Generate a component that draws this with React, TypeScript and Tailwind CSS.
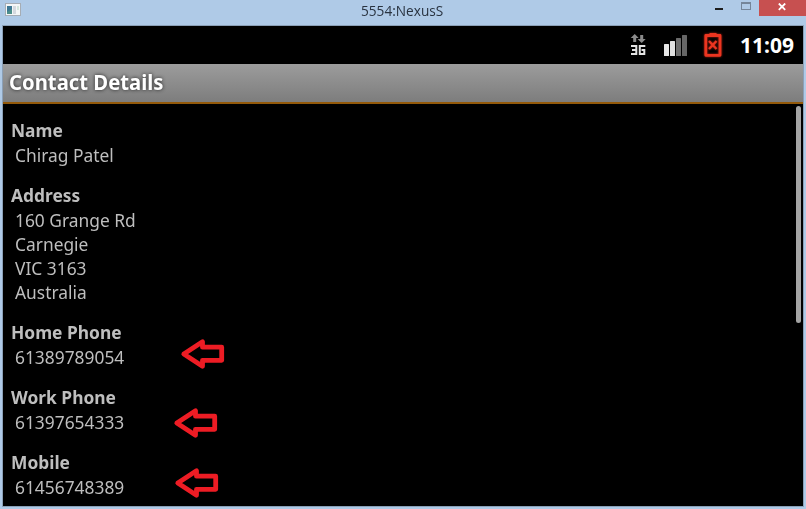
import React from "react";

const sections = [
  { title: "Name", lines: ["Chirag Patel"] },
  { title: "Address", lines: ["160 Grange Rd", "Carnegie", "VIC 3163", "Australia"] },
  { title: "Home Phone", lines: ["61389789054"], arrow: "left-[169px] top-[18px]" },
  { title: "Work Phone", lines: ["61397654333"], arrow: "left-[162px] top-[22px]" },
  { title: "Mobile", lines: ["61456748389"], arrow: "left-[163px] top-[17px]" },
];

function Arrow({ className }: { className: string }) {
  return (
    <svg className={`absolute ${className}`} width="46" height="34" viewBox="0 0 46 34" fill="none">
      <path
        d="M3.8 16 22.5 3.7V9.2H41.7V22.3H22.5V28.3L3.8 16Z"
        stroke="#ed1c24"
        strokeWidth="4.8"
        strokeLinejoin="round"
      />
    </svg>
  );
}

function TitleBar() {
  return (
    <header className="relative flex h-[25px] items-start justify-between">
      <svg className="ml-[5px] mt-[3px]" width="16" height="14">
        <rect x="0.5" y="0.5" width="15" height="12" fill="#f4f6f7" stroke="#a6adb5" />
        <rect x="2" y="3" width="5" height="8" fill="#4d8f8b" />
        <path d="M2 3h5v3L2 9z" fill="#3d7895" />
        <rect x="8" y="3" width="3" height="8" fill="#d5d9df" />
        <rect x="12" y="3" width="2" height="4" fill="#d3e6dd" />
      </svg>
      <h1 className="absolute left-[361px] top-0 origin-left scale-x-[0.91] font-['Open_Sans',sans-serif] text-[15px] leading-[21px] text-[#293340]">
        5554:NexusS
      </h1>
      <div className="flex items-start">
        <i className="mr-[18px] mt-[8px] h-[2px] w-[8px] bg-[#1e1e1e]" />
        <i className="mr-[8px] mt-[2px] h-[8px] w-[10px] border border-t-2 border-[#75869a]" />
        <div className="flex h-4 w-[47px] justify-center bg-[#c75050]">
          <svg className="mr-px mt-[3px]" width="8" height="8" viewBox="0 0 8 8">
            <path d="M.8 .5 7.2 6.8M7.2 .5.8 6.8" stroke="#fff" strokeWidth="1.8" />
          </svg>
        </div>
      </div>
    </header>
  );
}

function StatusBar() {
  return (
    <div className="flex h-[38px] items-start justify-end bg-black">
      <svg className="mt-[7px]" width="18" height="24" viewBox="0 0 18 24">
        <path d="M4.7 1 8.7 5H6.2V9H3.2V5H.7zM7.5 6h2.7V2h3v4h2.5L11.7 10z" fill="#8b8b8b" />
        <path
          d="M1 13H6.3V21H1M2 17H6.3M15.3 13H9.8V21H14.3V17H11.5"
          fill="none"
          stroke="#e4e4e4"
          strokeWidth="2"
        />
      </svg>
      <svg className="ml-[16px] mt-[8px]" width="24" height="22">
        <rect x="0" y="10" width="5" height="12" rx="0.5" fill="#e7e7e7" />
        <rect x="6" y="7" width="5" height="15" rx="0.5" fill="#e0e0e0" />
        <rect x="12" y="4" width="5" height="18" rx="0.5" fill="#6b6b6b" />
        <rect x="18" y="1" width="5" height="21" rx="0.5" fill="#666" />
      </svg>
      <svg className="ml-[15px] mt-[5px] overflow-visible drop-shadow-[0_0_1px_#b52414]" width="20" height="28">
        <path d="M2.8 4.5h14.2v19.8H2.8z" fill="none" stroke="#ec3520" strokeWidth="2.8" strokeLinejoin="round" />
        <path d="M6.5 2h7v2.5h-7z" fill="#ec3520" />
        <path d="m6 10 7.5 8m0-8L6 18" stroke="#ec3520" strokeWidth="2.3" />
      </svg>
      <span className="ml-[17px] mr-[8px] mt-[5px] w-[55px] origin-left whitespace-nowrap font-['Noto_Sans',sans-serif] text-[21px] font-bold leading-[28px] text-white">
        11:09
      </span>
    </div>
  );
}

export default function App() {
  return (
    <div className="h-[509px] w-[806px] overflow-hidden bg-[#afcae7]">
      <TitleBar />
      <main className="mx-[2px] h-[482px] border border-[#8ba0b7] bg-black">
        <StatusBar />
        <div className="h-10 border-b-2 border-[#93590a] bg-linear-to-b from-[#9c9c9c] to-[#7d7d7d] pl-[6px]">
          <h2 className="w-fit origin-left scale-x-[0.965] font-['Noto_Sans',sans-serif] text-[21px] font-bold leading-[37px] text-white [text-shadow:0px_0px_4px_#222]">
            Contact Details
          </h2>
        </div>
        <div className="flex justify-between">
          <div className="flex flex-col gap-4 pl-2 pt-[14px] font-['Noto_Sans',sans-serif] text-[18px] leading-6 text-[#bebebe]">
            {sections.map((s) => (
              <section key={s.title} className="relative w-[140px]">
                <h3 className="mb-px w-fit origin-left scale-x-[0.965] font-bold">{s.title}</h3>
                {s.lines.map((line) => (
                  <p key={line} className="ml-1 w-fit origin-left scale-x-[0.965]">{line}</p>
                ))}
                {s.arrow && <Arrow className={s.arrow} />}
              </section>
            ))}
          </div>
          <div className="mr-[2px] mt-[2px] h-[217px] w-[5px] rounded-full bg-[#a4a4a4]" />
        </div>
      </main>
    </div>
  );
}
